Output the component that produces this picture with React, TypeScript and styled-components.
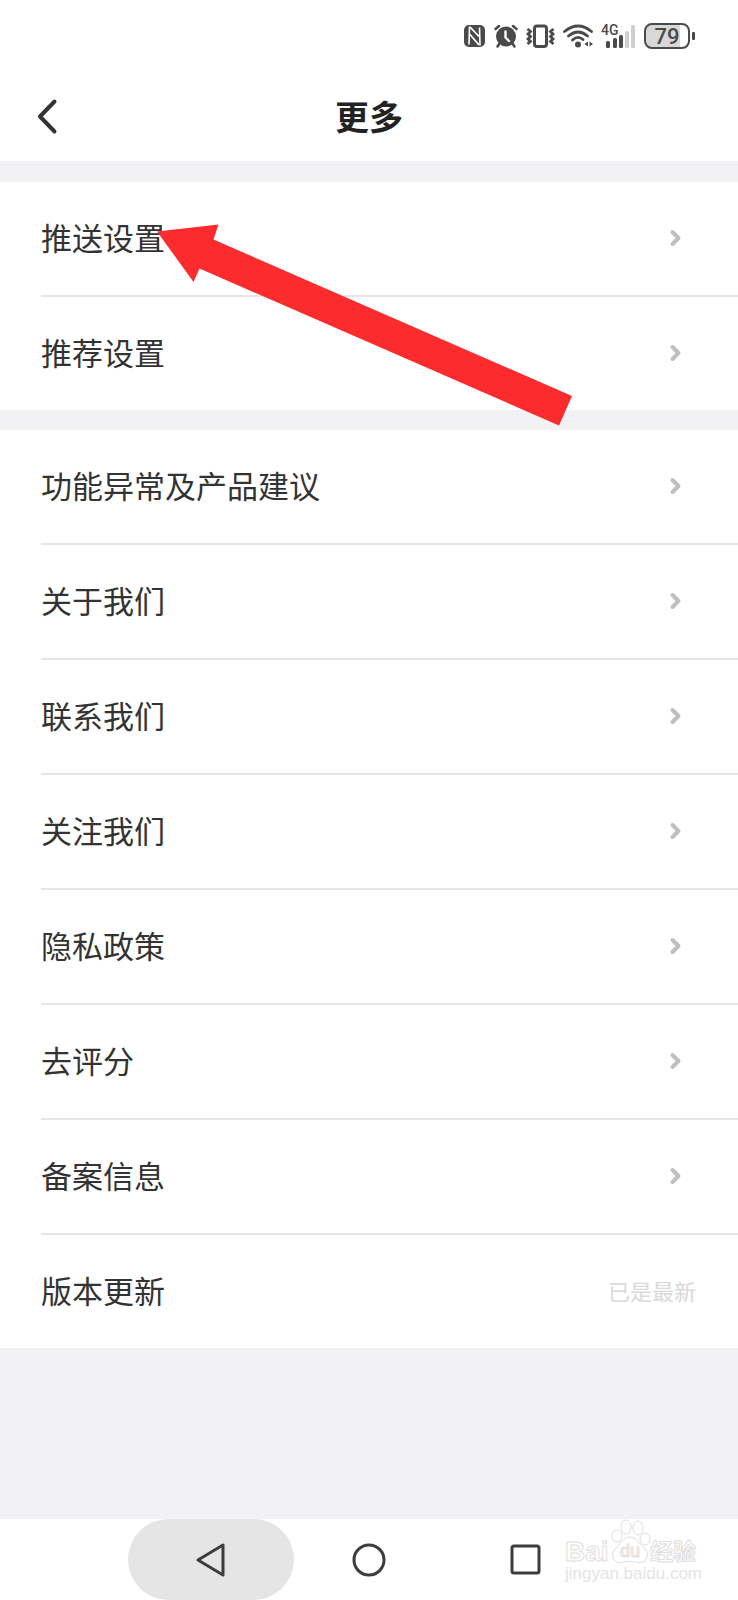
import React from 'react';
import styled, { createGlobalStyle } from 'styled-components';

const INK = '#3c3c3c';
const STATUS = '#4a4a4a';

const GlobalStyle = createGlobalStyle`
  *, *::before, *::after { box-sizing: border-box; }
  body {
    margin: 0;
    background: #f2f2f4;
    color: #333;
    font-family: "Noto Sans CJK SC", "Noto Sans", sans-serif;
  }
  button { font: inherit; color: inherit; border: 0; padding: 0; background: none; cursor: pointer; }
  svg { display: block; flex: none; }
`;

const Screen = styled.div`
  display: flex;
  flex-direction: column;
  min-height: 100vh;
`;

const StatusBar = styled.div`
  display: flex;
  align-items: center;
  justify-content: flex-end;
  gap: 8px;
  height: 72px;
  padding: 0 43px;
  background: #fff;
  color: ${STATUS};
  font-family: Roboto, sans-serif;
`;

const Signal = styled.div`
  position: relative;
`;

const NetworkLabel = styled.span`
  position: absolute;
  top: -1px;
  left: 0;
  font-size: 14px;
  line-height: 14px;
  font-weight: 500;
`;

const Battery = styled.div`
  display: flex;
  align-items: center;
  gap: 2px;
  &::after {
    content: "";
    width: 3px;
    height: 8px;
    border-radius: 1px;
    background: ${STATUS};
  }
`;

const BatteryCell = styled.span`
  width: 46px;
  height: 26px;
  border: 2px solid ${STATUS};
  border-radius: 8px;
  background: linear-gradient(to right, #d8d8d8 80%, #fff 80%);
  font-size: 22px;
  line-height: 23px;
  font-weight: 500;
  text-align: center;
`;

const Header = styled.header`
  display: grid;
  grid-template-columns: 92px 1fr 92px;
  align-items: center;
  height: 89px;
  padding-bottom: 2px;
  background: #fff;
`;

const BackButton = styled.button`
  display: flex;
  align-items: center;
  height: 100%;
  padding-left: 36px;
`;

const Title = styled.h1`
  margin: 0;
  font-size: 34px;
  line-height: 48px;
  font-weight: 700;
  text-align: center;
  color: #222;
`;

const Content = styled.main`
  display: flex;
  flex-direction: column;
  flex: 1;
  gap: 20px;
  padding: 21px 0;
`;

const Group = styled.ul`
  position: relative;
  margin: 0;
  padding: 0 0 0 41px;
  list-style: none;
  background: #fff;
`;

const Item = styled.li`
  & + & { border-top: 2px solid #e6e6e6; }
`;

const Row = styled.button`
  display: flex;
  align-items: center;
  justify-content: space-between;
  width: 100%;
  height: 113px;
  padding: 0 42px 1px 0;
  font-size: 31px;
  line-height: 44px;
  text-align: left;
`;

const RowLabel = styled.span`
  padding-bottom: 3px;
`;

const RowNote = styled.span`
  padding-bottom: 3px;
  font-size: 22px;
  line-height: 32px;
  color: #d9d9d9;
`;

const Pointer = styled.svg`
  position: absolute;
  top: 42px;
  left: 156px;
  z-index: 1;
  pointer-events: none;
`;

const NavBar = styled.nav`
  position: relative;
  display: flex;
  justify-content: center;
  height: 81px;
  background: #fff;
`;

const NavButton = styled.button<{ $pressed?: boolean }>`
  display: flex;
  align-items: center;
  justify-content: center;
  width: 166px;
  margin: 0 -4px;
  border-radius: 41px;
  background: ${(p) => (p.$pressed ? '#e5e5e5' : 'transparent')};
`;

const Watermark = styled.svg`
  position: absolute;
  top: 0;
  right: 36px;
  pointer-events: none;
`;

const NfcIcon = () => (
  <svg width="22" height="24" viewBox="0 0 22 24" aria-label="NFC">
    <rect x="0" y="1" width="21" height="22" rx="5" fill={STATUS} />
    <path d="M5.500 2.500L5 20.500M15.500 3.500L16 21.500" fill="none" stroke="#fff" strokeWidth="1.600" />
    <path d="M6 3L15 12.500M6 10.500L15 21" fill="none" stroke="#fff" strokeWidth="1.800" />
  </svg>
);

const AlarmIcon = () => (
  <svg width="24" height="24" viewBox="0 0 24 24" aria-label="闹钟">
    <circle cx="12" cy="12.500" r="10" fill={STATUS} />
    <path d="M1.500 5L5 2M22.500 5L19 2M5.500 19.500L3.500 22.500M18.500 19.500L20.500 22.500" stroke={STATUS} strokeWidth="2.500" strokeLinecap="round" />
    <path d="M11.500 7.500v6L15 17" fill="none" stroke="#fff" strokeWidth="2.400" strokeLinecap="round" />
  </svg>
);

const VibrateIcon = () => (
  <svg width="29" height="24" viewBox="0 0 29 24" fill="none" stroke={STATUS} aria-label="振动">
    <rect x="8.500" y="2" width="12" height="20.500" rx="2.500" strokeWidth="3" />
    <path d="M1.500 5l3 2.500L2 10l2.500 2.500L2 15l2.500 2.500L1.500 20M27.500 5l-3 2.500L27 10l-2.500 2.500L27 15l-2.500 2.500L27.500 20" strokeWidth="2.800" />
  </svg>
);

const WifiIcon = () => (
  <svg width="30" height="24" viewBox="0 0 30 24" fill="none" stroke={STATUS} strokeLinecap="round" aria-label="无线网络">
    <path d="M1.500 7.500Q15-3.500 28.500 7.500M5.500 12Q15 4 24.500 12M9.500 16Q15 11 20 15.500" strokeWidth="2.800" />
    <circle cx="15" cy="20.500" r="3" fill={STATUS} stroke="none" />
    <path d="M25 17.500v5l-3.500-2.500zM26.500 17.500v5l3.500-2.500z" fill={STATUS} stroke="none" />
  </svg>
);

const BARS = [
  { x: 5, y: 17, on: true },
  { x: 12, y: 14, on: true },
  { x: 18, y: 11, on: true },
  { x: 24, y: 7, on: false },
  { x: 30, y: 1, on: false },
];

const SignalBars = () => (
  <svg width="35" height="24" viewBox="0 0 35 24" aria-hidden="true">
    {BARS.map((b) => (
      <rect key={b.x} x={b.x} y={b.y} width="4" height={24 - b.y} rx="1.500" fill={b.on ? STATUS : '#cfcfcf'} />
    ))}
  </svg>
);

const Chevron = () => (
  <svg width="40" height="20" viewBox="0 0 40 20" fill="none" stroke="#bfbfbf" strokeWidth="4" strokeLinecap="round" strokeLinejoin="round" aria-hidden="true">
    <path d="M16.500 4L22.500 10L16.500 16" />
  </svg>
);

const GROUPS: { label: string; note?: string }[][] = [
  [{ label: '推送设置' }, { label: '推荐设置' }],
  [
    { label: '功能异常及产品建议' },
    { label: '关于我们' },
    { label: '联系我们' },
    { label: '关注我们' },
    { label: '隐私政策' },
    { label: '去评分' },
    { label: '备案信息' },
    { label: '版本更新', note: '已是最新' },
  ],
];

export default function App() {
  return (
    <Screen>
      <GlobalStyle />
      <StatusBar>
        <NfcIcon />
        <AlarmIcon />
        <VibrateIcon />
        <WifiIcon />
        <Signal>
          <NetworkLabel>4G</NetworkLabel>
          <SignalBars />
        </Signal>
        <Battery>
          <BatteryCell>79</BatteryCell>
        </Battery>
      </StatusBar>

      <Header>
        <BackButton aria-label="返回">
          <svg width="24" height="40" viewBox="0 0 24 40" fill="none" stroke="#333" strokeWidth="4" strokeLinecap="round" strokeLinejoin="round">
            <path d="M18.500 5.500L4 20.500L18.500 35.500" />
          </svg>
        </BackButton>
        <Title>更多</Title>
      </Header>

      <Content>
        {GROUPS.map((items, index) => (
          <Group key={items[0].label}>
            {items.map(({ label, note }) => (
              <Item key={label}>
                <Row>
                  <RowLabel>{label}</RowLabel>
                  {note ? <RowNote>{note}</RowNote> : <Chevron />}
                </Row>
              </Item>
            ))}
            {index === 0 && (
              <Pointer width="418" height="204" viewBox="0 0 418 204" aria-hidden="true">
                <path d="M1 7.500L62.500 0.500L57.500 15.500L416 172L403 201.500L43.500 44.500L37.500 58Z" fill="#fc2c2e" />
              </Pointer>
            )}
          </Group>
        ))}
      </Content>

      <NavBar>
        <NavButton $pressed aria-label="返回上一页">
          <svg width="34" height="40" viewBox="0 0 34 40" fill="none" stroke={INK} strokeWidth="3" strokeLinejoin="round">
            <path d="M4 20L29 5V35Z" />
          </svg>
        </NavButton>
        <NavButton aria-label="主页">
          <svg width="36" height="36" viewBox="0 0 36 36" fill="none" stroke={INK} strokeWidth="3">
            <circle cx="18" cy="18" r="15" />
          </svg>
        </NavButton>
        <NavButton aria-label="最近任务">
          <svg width="36" height="36" viewBox="0 0 36 36" fill="none" stroke={INK} strokeWidth="3">
            <rect x="3" y="4" width="27" height="27" rx="2" />
          </svg>
        </NavButton>
        <Watermark width="140" height="70" viewBox="0 0 140 70" fill="#fff" stroke="#dedede" strokeWidth="1" fontFamily="'Liberation Sans', 'Noto Sans CJK SC', sans-serif">
          <text x="3" y="42" fontSize="28" fontWeight="700">Bai</text>
          <g>
            <ellipse cx="55" cy="17" rx="5" ry="6" />
            <ellipse cx="64" cy="8" rx="5" ry="7" />
            <ellipse cx="76" cy="9" rx="5" ry="7" />
            <ellipse cx="83" cy="20" rx="5" ry="6" />
            <path d="M68 18C61 18 59 25 54 29C48 34 50 43.500 58 43.500C62 43.500 64 42.500 68 42.500C72 42.500 74 43.500 78 43.500C86 43.500 88 34 82 29C77 25 75 18 68 18Z" />
          </g>
          <text x="58" y="38" fontSize="18">du</text>
          <text x="88" y="41" fontSize="23" fontWeight="700">经验</text>
          <text x="3" y="60" fontSize="17" fill="#e4e4e4" stroke="none">jingyan.baidu.com</text>
        </Watermark>
      </NavBar>
    </Screen>
  );
}
